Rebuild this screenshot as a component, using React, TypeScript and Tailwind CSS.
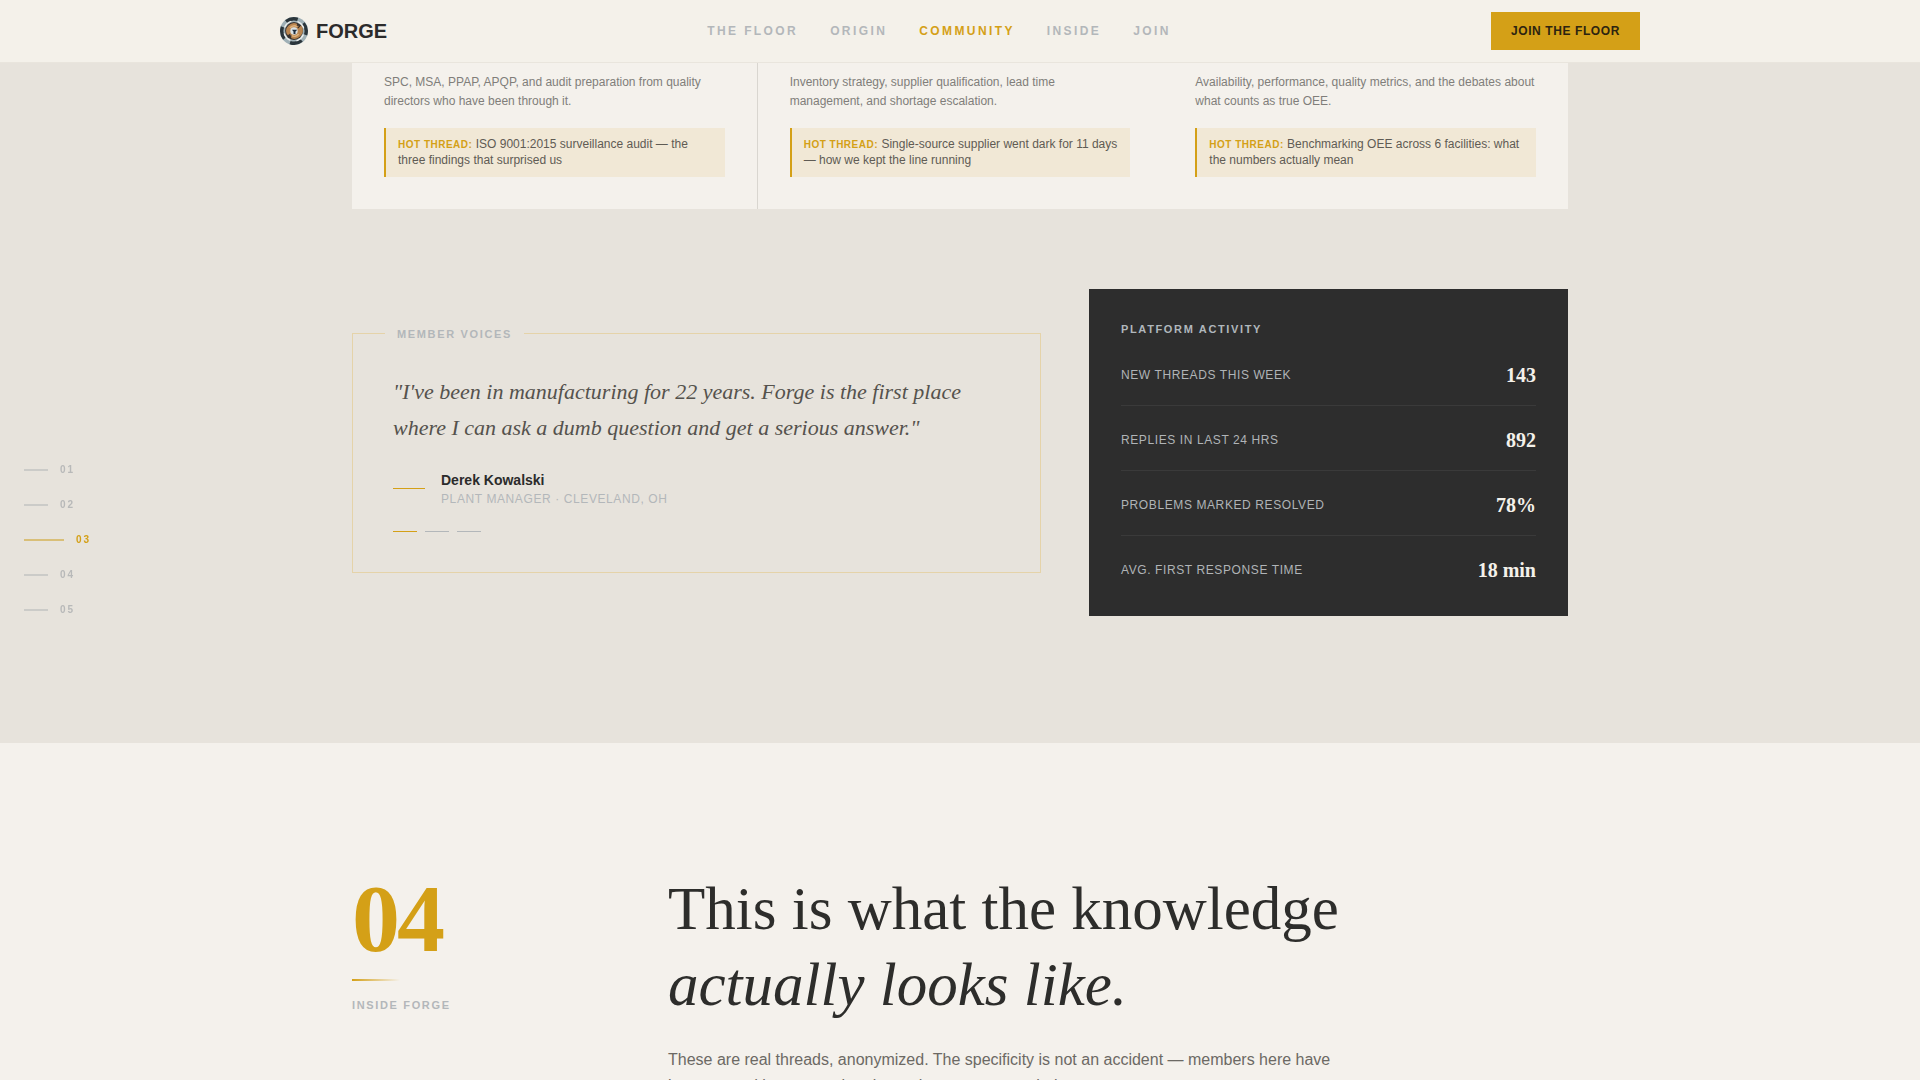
const navLinks = [
  { label: "The Floor", href: "#floor" },
  { label: "Origin", href: "#origin" },
  { label: "Community", href: "#community", active: true },
  { label: "Inside", href: "#inside" },
  { label: "Join", href: "#join" },
];

const rooms = [
  {
    id: 1,
    description: "SPC, MSA, PPAP, APQP, and audit preparation from quality directors who have been through it.",
    thread: "ISO 9001:2015 surveillance audit — the three findings that surprised us",
  },
  {
    id: 2,
    description: "Inventory strategy, supplier qualification, lead time management, and shortage escalation.",
    thread: "Single-source supplier went dark for 11 days — how we kept the line running",
  },
  {
    id: 3,
    description: "Availability, performance, quality metrics, and the debates about what counts as true OEE.",
    thread: "Benchmarking OEE across 6 facilities: what the numbers actually mean",
  },
];

const stats = [
  { label: "New threads this week", value: "143" },
  { label: "Replies in last 24 hrs", value: "892" },
  { label: "Problems marked resolved", value: "78%" },
  { label: "Avg. first response time", value: "18 min" },
];

const sections = ["01", "02", "03", "04", "05"];

function Logo() {
  return (
    <svg viewBox="0 0 28 28" className="w-7 h-7" aria-hidden="true">
      <circle cx="14" cy="14" r="14" fill="#9fb0b6" />
      <circle
        cx="14"
        cy="14"
        r="12.2"
        fill="none"
        stroke="#2a353b"
        strokeWidth="3.4"
        strokeDasharray="12.2 6.96"
        transform="rotate(-130 14 14)"
      />
      <circle
        cx="14"
        cy="14"
        r="10"
        fill="none"
        stroke="#eceeec"
        strokeWidth="1.5"
        strokeDasharray="9.4 6.3"
        transform="rotate(-160 14 14)"
      />
      <circle cx="14" cy="14" r="8.9" fill="#3b332e" />
      <path
        d="M7 17.6a7.8 7.8 0 0 1 1.6-9 7.8 7.8 0 0 1 8.8-1.7l-1 2.2 4.8-.6a7.8 7.8 0 0 1-1.2 11 7.8 7.8 0 0 1-9 1.4l.8-2.4z"
        fill="#b98550"
      />
      <path d="M10 11a5.4 5.4 0 0 1 7-1.4M18.6 17a5.4 5.4 0 0 1-7 1.6" fill="none" stroke="#dcb07a" strokeWidth="1.6" />
      <path d="M17.6 7.2l2.6 1.4-2.4 2.4M10.6 20.8l-2.4-1.6 2-2.2" fill="none" stroke="#33302e" strokeWidth="1.1" />
      <circle cx="14" cy="14" r="3.7" fill="#dbe3e6" />
      <path d="M12 12.8h5.2l-1.8 1.9.1 2.5-2.1-.5.2-2z" fill="#1b2a3c" />
    </svg>
  );
}

function Header() {
  return (
    <header className="fixed inset-x-0 top-0 z-20 bg-[#f4f1ea] border-b border-[#e9e5dd]">
      <div className="max-w-[1360px] mx-auto py-3 flex items-center justify-between">
        <a href="#top" className="flex items-center gap-2">
          <Logo />
          <span className="text-xl leading-6 font-bold text-[#2b2b2b]">FORGE</span>
        </a>
        <nav className="flex items-center gap-8">
          {navLinks.map((link) => (
            <a
              key={link.label}
              href={link.href}
              className={`text-xs font-bold uppercase tracking-[0.2em] ${link.active ? "text-[#d4a017]" : "text-[#b3b7ba]"}`}
            >
              {link.label}
            </a>
          ))}
        </nav>
        <button className="bg-[#d4a017] text-[#2d2410] text-xs leading-[14px] font-bold uppercase tracking-[0.05em] px-5 py-3">
          Join the Floor
        </button>
      </div>
    </header>
  );
}

function SectionNav() {
  return (
    <nav aria-label="Sections" className="fixed left-6 top-1/2 -translate-y-1/2 z-10 flex flex-col gap-[23px]">
      {sections.map((num) => {
        const active = num === "03";
        return (
          <a key={num} href={`#section-${num}`} className="flex items-center gap-3">
            <span className={`h-0.5 ${active ? "w-10 bg-[#d9bf78]" : "w-6 bg-[#cbcbc8]"}`} />
            <span
              className={`text-[10px] leading-3 font-bold tracking-[0.2em] ${active ? "text-[#d4a017]" : "text-[#b8b9b9]"}`}
            >
              {num}
            </span>
          </a>
        );
      })}
    </nav>
  );
}

function MemberVoices() {
  return (
    <figure className="relative border border-[#e5d3a9] p-10">
      <span className="absolute -top-2 left-8 bg-[#e7e3dc] px-3 text-[11px] leading-4 font-bold uppercase tracking-[0.15em] text-[#b3b7ba]">
        Member Voices
      </span>
      <blockquote className="font-['Liberation_Serif',serif] italic text-[22px] leading-9 text-[#55524d]">
        "I've been in manufacturing for 22 years. Forge is the first place where I can ask a dumb question and get a
        serious answer."
      </blockquote>
      <figcaption className="mt-6 flex items-center gap-4">
        <span className="w-8 h-px bg-[#d4a017]" />
        <div>
          <p className="text-sm leading-[21px] font-bold text-[#2b2b2b]">Derek Kowalski</p>
          <p className="text-xs leading-4 uppercase tracking-[0.05em] text-[#b3b7ba]">Plant Manager · Cleveland, OH</p>
        </div>
      </figcaption>
      <div className="mt-6 flex gap-2">
        <button aria-label="Quote 1" className="w-6 h-px bg-[#d4a017]" />
        <button aria-label="Quote 2" className="w-6 h-px bg-[#b3b7ba]" />
        <button aria-label="Quote 3" className="w-6 h-px bg-[#b3b7ba]" />
      </div>
    </figure>
  );
}

function PlatformActivity() {
  return (
    <div className="bg-[#2d2d2d] p-8">
      <h3 className="mb-1 text-[11px] leading-4 font-bold uppercase tracking-[0.15em] text-[#b0b7bc]">
        Platform Activity
      </h3>
      <dl>
        {stats.map((stat) => (
          <div
            key={stat.label}
            className="flex items-center justify-between pt-5 pb-4 border-b border-[#3a3a3a] last:border-b-0 last:pb-0"
          >
            <dt className="text-xs uppercase tracking-[0.05em] text-[#b0b4b7]">{stat.label}</dt>
            <dd className="font-['Liberation_Serif',serif] text-xl leading-7 font-bold text-[#f4f1ea]">{stat.value}</dd>
          </div>
        ))}
      </dl>
    </div>
  );
}

export default function App() {
  return (
    <div className="h-screen overflow-hidden bg-[#f4f1ec] font-['Liberation_Sans',Arial,sans-serif]">
      <Header />
      <SectionNav />
      <main className="pt-[63px]">
        <section id="community" className="bg-[#e7e3dc] pb-[127px]">
          <div className="max-w-[1216px] mx-auto">
            <div className="grid grid-cols-3 gap-px bg-[#f4f1ec]">
              {rooms.map((room) => (
                <article key={room.id} className="px-8 pt-[10px] pb-8 first:shadow-[1px_0_0_#d9d6d0]">
                  <p className="mb-[17px] text-xs leading-[19px] text-[#807e7a]">{room.description}</p>
                  <p className="border-l-2 border-[#d4a017] bg-[#f1e8d6] px-3 pt-2 pb-[9px] text-xs leading-4 text-[#5f5b54]">
                    <strong className="text-[10px] leading-none font-bold uppercase tracking-[0.05em] text-[#d4a017]">
                      Hot thread:
                    </strong>{" "}
                    {room.thread}
                  </p>
                </article>
              ))}
            </div>
            <div className="mt-20 grid grid-cols-[689fr_479fr] gap-12 items-center">
              <MemberVoices />
              <PlatformActivity />
            </div>
          </div>
        </section>

        <section id="inside" className="py-32">
          <div className="max-w-[1216px] mx-auto grid grid-cols-[220px_1fr] gap-24">
            <div>
              <p className="font-['Liberation_Serif',serif] text-8xl leading-none font-bold tracking-[-0.03em] text-[#d4a017]">
                04
              </p>
              <div className="mt-3 w-12 h-0.5 bg-linear-to-r from-[#d4a017] to-transparent" />
              <p className="mt-4 text-[11px] leading-4 font-bold uppercase tracking-[0.15em] text-[#b3b7ba]">
                Inside Forge
              </p>
            </div>
            <div>
              <h2 className="font-['Liberation_Serif',serif] text-[61px] leading-[76px] text-[#2d2d2b]">
                This is what the knowledge
                <br />
                <em>actually looks like.</em>
              </h2>
              <p className="mt-6 max-w-[680px] text-base leading-[26px] text-[#6c6964]">
                These are real threads, anonymized. The specificity is not an accident — members here have been around
                long enough to know that vague posts help.
              </p>
            </div>
          </div>
        </section>
      </main>
    </div>
  );
}
